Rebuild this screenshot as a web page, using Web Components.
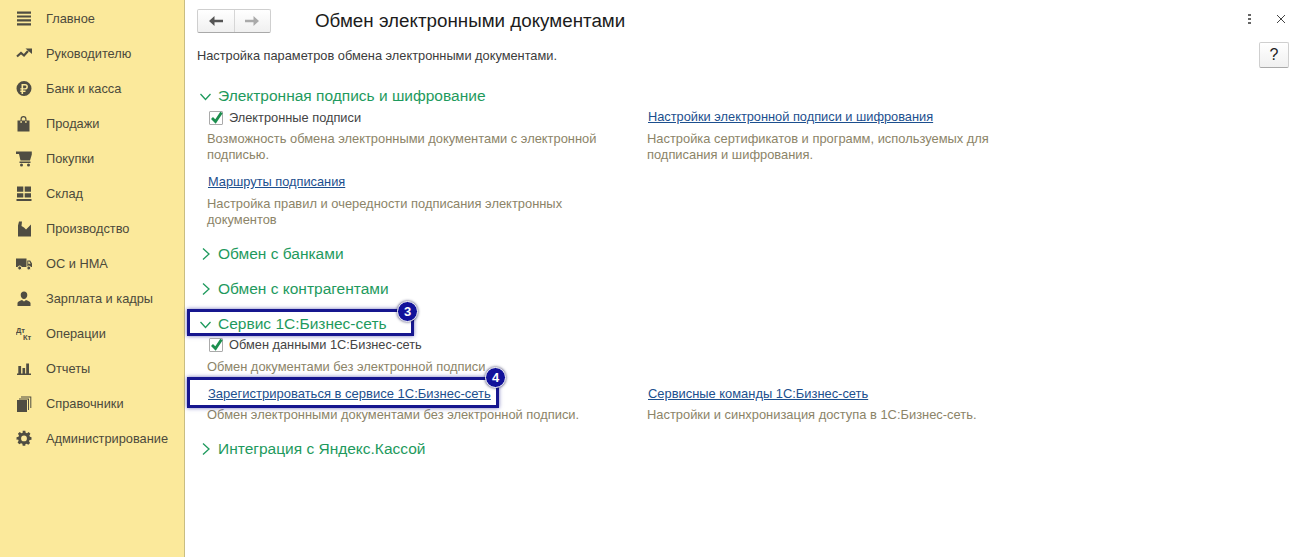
<!DOCTYPE html>
<html lang="ru">
<head>
<meta charset="utf-8">
<title>Обмен электронными документами</title>
<style>
  html, body { margin: 0; height: 100%; background: #fff; }
  body { font: 12.8px "Liberation Sans", Arial, sans-serif; color: #3c3c3c; }
</style>
</head>
<body>
<app-shell>
  <side-nav slot="nav">
    <nav-item icon="menu">Главное</nav-item>
    <nav-item icon="trend">Руководителю</nav-item>
    <nav-item icon="ruble">Банк и касса</nav-item>
    <nav-item icon="bag">Продажи</nav-item>
    <nav-item icon="cart">Покупки</nav-item>
    <nav-item icon="store">Склад</nav-item>
    <nav-item icon="factory">Производство</nav-item>
    <nav-item icon="truck">ОС и НМА</nav-item>
    <nav-item icon="person">Зарплата и кадры</nav-item>
    <nav-item icon="dtkt">Операции</nav-item>
    <nav-item icon="bars">Отчеты</nav-item>
    <nav-item icon="books">Справочники</nav-item>
    <nav-item icon="gear">Администрирование</nav-item>
  </side-nav>

  <page-head heading="Обмен электронными документами" sub="Настройка параметров обмена электронными документами."></page-head>

  <group-section open heading="Электронная подпись и шифрование" style="margin-top:16px">
    <two-cols style="margin-top:3px">
      <div>
        <check-row>Электронные подписи</check-row>
        <hint-text style="margin-top:5px">Возможность обмена электронными документами с электронной подписью.</hint-text>
        <cmd-link style="margin-top:11px">Маршруты подписания</cmd-link>
        <hint-text>Настройка правил и очередности подписания электронных документов</hint-text>
      </div>
      <div slot="right">
        <cmd-link>Настройки электронной подписи и шифрования</cmd-link>
        <hint-text>Настройка сертификатов и программ, используемых для подписания и шифрования.</hint-text>
      </div>
    </two-cols>
  </group-section>

  <group-section heading="Обмен с банками" style="margin-top:16px"></group-section>
  <group-section heading="Обмен с контрагентами" style="margin-top:15px"></group-section>

  <group-section open heading="Сервис 1С:Бизнес-сеть" mark="3" style="margin-top:15px">
    <two-cols>
      <div>
        <check-row>Обмен данными 1С:Бизнес-сеть</check-row>
        <hint-text>Обмен документами без электронной подписи</hint-text>
        <callout-frame mark="4"><cmd-link style="font-size:13px">Зарегистрироваться в сервисе 1С:Бизнес-сеть</cmd-link></callout-frame>
        <hint-text style="margin-top:5px">Обмен электронными документами без электронной подписи.</hint-text>
      </div>
      <div slot="right" style="padding-top:50px">
        <cmd-link style="font-size:12.900px">Сервисные команды 1С:Бизнес-сеть</cmd-link>
        <hint-text style="margin-top:5px">Настройки и синхронизация доступа в 1С:Бизнес-сеть.</hint-text>
      </div>
    </two-cols>
  </group-section>

  <group-section heading="Интеграция с Яндекс.Кассой" style="margin-top:16px"></group-section>
</app-shell>

<script>
  const ICONS = {
    menu: `<path d="M1 1.500h14v2.200H1zM1 5.400h14v2.200H1zM1 9.300h14v2.200H1zM1 13.200h14v2.200H1z"/>`,
    trend: `<path d="M1 11.500 5 8l3 2.500 4-4.500" fill="none" stroke="currentColor" stroke-width="2.200"/><path d="M9.500 3.500H16V9z"/>`,
    ruble: `<path fill-rule="evenodd" d="M8 1a7.500 7.500 0 1 0 0 15A7.500 7.500 0 0 0 8 1zM5.500 4h3.600a2.800 2.800 0 0 1 0 5.600H7.100v1h2.400V12H7.100v2H5.500v-2H4.300v-1.400h1.200v-1H4.300V8.200h1.200zm1.600 1.400v2.800H9a1.400 1.400 0 0 0 0-2.800z"/>`,
    bag: `<path fill-rule="evenodd" d="M1.500 5.500h3V4a3 3 0 0 1 6 0v1.500h3v11h-12zM5.700 5.500h3.600V4a1.800 1.800 0 0 0-3.600 0zM4.500 6v2h1.200V6zm4.800 0v2h1.200V6z"/>`,
    cart: `<path d="M0 1.500h15.800v3l-1.800 6H4.500L3 4H0z"/><path d="M3.500 11.500h11V13h-11z"/><circle cx="5.500" cy="15" r="1.500"/><circle cx="12.500" cy="15" r="1.500"/>`,
    store: `<path d="M1 1.500h6.300v5.300H1zM8.700 1.500H15v5.300H8.700zM1 8.200h6.300v4.300H1zM8.700 8.200H15v4.300H8.700zM.5 14H15.500v2H.5z"/>`,
    factory: `<path d="M2 16.500V5.500L3 1.500h3L5.500 6 8 7.500l2 2 5-5v12z"/>`,
    truck: `<path fill-rule="evenodd" d="M0 3.500h10.500V12H0zM11.300 5.500h2.900l1.800 3V12h-4.700zm1 1v2.300h2.300l-1.300-2.300z"/><circle cx="3.700" cy="13" r="2" stroke="#fbe99b"/><circle cx="12.800" cy="13" r="2" stroke="#fbe99b"/>`,
    person: `<path d="M8 1.500c2 0 3.300 1.400 3.300 3.500S9.900 9 8 9 4.700 7.100 4.700 5 6 1.500 8 1.500zM1.500 16v-3c0-1.500 3-2.500 4.500-3l2 1.500 2-1.500c1.500.5 4.500 1.500 4.500 3v3z"/>`,
    dtkt: `<text x="0" y="7.500" font-family="Liberation Sans, sans-serif" font-size="7.500" font-weight="700">Дт</text><text x="7" y="14.500" font-family="Liberation Sans, sans-serif" font-size="7.500" font-weight="700">Кт</text>`,
    bars: `<path d="M2.300 6h2.800v7.500H2.300zM6.500 8h2.600v5.500H6.500zM10.200 3.500H13v10h-2.800zM1 13.500h14V15H1z"/>`,
    books: `<path d="M1 5h10v12H1z"/><path d="M3 3.500h10V15h-1V4.500H3zM5 1.500h10.300V13h-1V2.500H5z"/>`,
    gear: `<path fill-rule="evenodd" d="M7 1h3l.4 2.200 1.500.6 1.900-1.200 2 2-1.200 1.900.6 1.500L17 8.400v2.800l-2.200.4-.6 1.500 1.200 1.900-2 2-1.900-1.200-1.500.6L10 18H7l-.4-2.200-1.500-.6-1.900 1.200-2-2 1.200-1.900-.6-1.500L0 11.200V8.400l2.200-.4.600-1.500L1.600 4.600l2-2 1.900 1.200L7 3.200zm1.500 5.500a3.300 3.300 0 1 0 0 6.600 3.300 3.300 0 0 0 0-6.600z" transform="scale(.88) translate(.6 -.2)"/>`
  };

  class AppShell extends HTMLElement {
    constructor() {
      super();
      this.attachShadow({ mode: "open" }).innerHTML = `
        <style>
          :host { display: flex; height: 557px; overflow: hidden; }
          main { flex: 1; padding: 8px 0 0 12px; box-sizing: border-box; min-width: 0; }
        </style>
        <slot name="nav"></slot>
        <main><slot></slot></main>
      `;
    }
  }

  class SideNav extends HTMLElement {
    constructor() {
      super();
      this.attachShadow({ mode: "open" }).innerHTML = `
        <style>
          :host {
            display: block; flex: none; width: 185px; box-sizing: border-box;
            background: #fbe99b; border-right: 1px solid #c9bd82;
            padding-top: 1px;
          }
        </style>
        <slot></slot>
      `;
    }
  }

  class NavItem extends HTMLElement {
    constructor() {
      super();
      const icon = ICONS[this.getAttribute("icon")] || "";
      this.attachShadow({ mode: "open" }).innerHTML = `
        <style>
          :host {
            display: flex; align-items: center; height: 35px; color: #4c4a3c;
            padding-left: 16px; gap: 13px; white-space: nowrap;
          }
          svg { width: 17px; height: 17px; fill: #4f4d42; color: #4f4d42; flex: none; }
        </style>
        <svg viewBox="0 0 17 17">${icon}</svg>
        <slot></slot>
      `;
    }
  }

  class PageHead extends HTMLElement {
    constructor() {
      super();
      this.attachShadow({ mode: "open" }).innerHTML = `
        <style>
          :host { display: block; padding-right: 20px; }
          .top { display: flex; align-items: center; height: 26px; }
          .nav {
            display: flex; width: 74px; height: 24px; box-sizing: border-box; flex: none;
            border: 1px solid #cfcfcf; border-bottom-color: #a9a9a9; border-radius: 2px;
            background: linear-gradient(#fff, #f0f0f0);
          }
          .nav span { flex: 1; display: flex; align-items: center; justify-content: center; }
          .nav span + span { border-left: 1px solid #d6d6d6; }
          .nav svg { width: 14px; height: 10px; }
          h1 { font: 400 18.800px "Liberation Sans", Arial, sans-serif; color: #1c1c1c; margin: 0 0 0 44px; flex: 1; }
          .more { width: 3px; display: grid; gap: 2px; margin: -4px 25px 0 0; }
          .more i { height: 2px; background: #666; display: block; }
          .close { width: 10px; height: 10px; margin: -4px 1px 0 0; }
          .row { display: flex; align-items: center; justify-content: space-between; margin-top: 6px; height: 30px; }
          .help {
            width: 30px; height: 26px; box-sizing: border-box; text-align: center; line-height: 24px;
            border: 1px solid #cfcfcf; border-bottom-color: #a9a9a9; border-radius: 2px; margin-right: -2px;
            background: linear-gradient(#fff, #f0f0f0); font-size: 16px; color: #222;
          }
        </style>
        <div class="top">
          <div class="nav">
            <span><svg viewBox="0 0 14 10"><path d="M5.500 0 0 5l5.500 5V6.200H14V3.800H5.500z" fill="#555"/></svg></span>
            <span><svg viewBox="0 0 14 10"><path d="M8.500 0 14 5l-5.500 5V6.200H0V3.800h8.500z" fill="#aaa"/></svg></span>
          </div>
          <h1>${this.getAttribute("heading")}</h1>
          <div class="more"><i></i><i></i><i></i></div>
          <svg class="close" viewBox="0 0 10 10"><path d="M1 1l8 8M9 1 1 9" stroke="#444" fill="none"/></svg>
        </div>
        <div class="row"><span>${this.getAttribute("sub")}</span><div class="help">?</div></div>
      `;
    }
  }

  class GroupSection extends HTMLElement {
    constructor() {
      super();
      const open = this.hasAttribute("open");
      const mark = this.getAttribute("mark");
      const chevron = open ? "M.5 4l5 5.500 5-5.500" : "M3 .5 9 6l-6 5.500";
      this.attachShadow({ mode: "open" }).innerHTML = `
        <style>
          :host { display: block; }
          .title {
            display: flex; align-items: center; height: 20px; gap: 6px; position: relative;
            font-size: 15.500px; color: #1e9a5d; padding-left: 3px; white-space: nowrap;
          }
          svg { width: 12px; height: 12px; flex: none; }
          .body { padding-left: 10px; }
          .frame {
            position: absolute; left: -10px; top: -5px; width: 227px; height: 27px; box-sizing: border-box;
            border: 3px solid #16168f; box-shadow: 0 0 4px rgba(22, 22, 143, .6);
          }
          .badge {
            position: absolute; left: 200px; top: -13px; width: 19px; height: 19px; border-radius: 50%;
            background: #12129a; color: #fff; font-size: 13px; font-weight: 700; text-align: center; line-height: 19px;
            border: 1px solid #fff; box-shadow: 0 0 3px rgba(0, 0, 60, .8);
          }
        </style>
        <div class="title">
          <svg viewBox="0 0 12 12"><path d="${chevron}" fill="none" stroke="#1e9a5d" stroke-width="1.300"/></svg>
          ${this.getAttribute("heading")}
          ${mark ? `<div class="frame"></div><div class="badge">${mark}</div>` : ""}
        </div>
        ${open ? `<div class="body"><slot></slot></div>` : ""}
      `;
    }
  }

  class TwoCols extends HTMLElement {
    constructor() {
      super();
      this.attachShadow({ mode: "open" }).innerHTML = `
        <style>
          :host { display: grid; grid-template-columns: 440px 380px; align-items: start; margin-top: 2px; }
        </style>
        <slot></slot>
        <slot name="right"></slot>
      `;
    }
  }

  class CheckRow extends HTMLElement {
    constructor() {
      super();
      this.attachShadow({ mode: "open" }).innerHTML = `
        <style>
          :host { display: flex; align-items: center; height: 17px; gap: 6px; padding-left: 2px; color: #444; white-space: nowrap; }
          .box { width: 14px; height: 14px; box-sizing: border-box; border: 1px solid #aaa; border-radius: 1px; position: relative; flex: none; background: #fff; }
          svg { position: absolute; left: -1px; top: -1px; width: 14px; height: 14px; overflow: visible; }
        </style>
        <div class="box"><svg viewBox="0 0 14 14"><path d="M3 7l3.500 3.500L12.500 1.500" fill="none" stroke="#1d8f4f" stroke-width="2.800"/></svg></div>
        <slot></slot>
      `;
    }
  }

  class CmdLink extends HTMLElement {
    constructor() {
      super();
      this.attachShadow({ mode: "open" }).innerHTML = `
        <style>
          :host { display: block; padding-left: 1px; line-height: 16px; color: #1c4f8e; white-space: nowrap; }
          a { color: inherit; text-decoration: underline; }
        </style>
        <a href="#"><slot></slot></a>
      `;
    }
  }

  class HintText extends HTMLElement {
    constructor() {
      super();
      this.attachShadow({ mode: "open" }).innerHTML = `
        <style>
          :host { display: block; width: 400px; margin-top: 6px; line-height: 16px; font-size: 12.900px; color: #8c8468; }
        </style>
        <slot></slot>
      `;
    }
  }

  class CalloutFrame extends HTMLElement {
    constructor() {
      super();
      this.attachShadow({ mode: "open" }).innerHTML = `
        <style>
          :host { display: block; position: relative; margin-top: 11px; }
          .frame {
            position: absolute; left: -20px; top: -9px; width: 312px; height: 31px; box-sizing: border-box;
            border: 3px solid #16168f; box-shadow: 0 0 4px rgba(22, 22, 143, .6);
          }
          .badge {
            position: absolute; left: 278px; top: -19px; width: 19px; height: 19px; border-radius: 50%;
            background: #12129a; color: #fff; font-size: 13px; font-weight: 700; text-align: center; line-height: 19px;
            border: 1px solid #fff; box-shadow: 0 0 3px rgba(0, 0, 60, .8);
          }
        </style>
        <slot></slot>
        <div class="frame"></div>
        <div class="badge">${this.getAttribute("mark")}</div>
      `;
    }
  }

  customElements.define("app-shell", AppShell);
  customElements.define("side-nav", SideNav);
  customElements.define("nav-item", NavItem);
  customElements.define("page-head", PageHead);
  customElements.define("group-section", GroupSection);
  customElements.define("two-cols", TwoCols);
  customElements.define("check-row", CheckRow);
  customElements.define("cmd-link", CmdLink);
  customElements.define("hint-text", HintText);
  customElements.define("callout-frame", CalloutFrame);
</script>
</body>
</html>
